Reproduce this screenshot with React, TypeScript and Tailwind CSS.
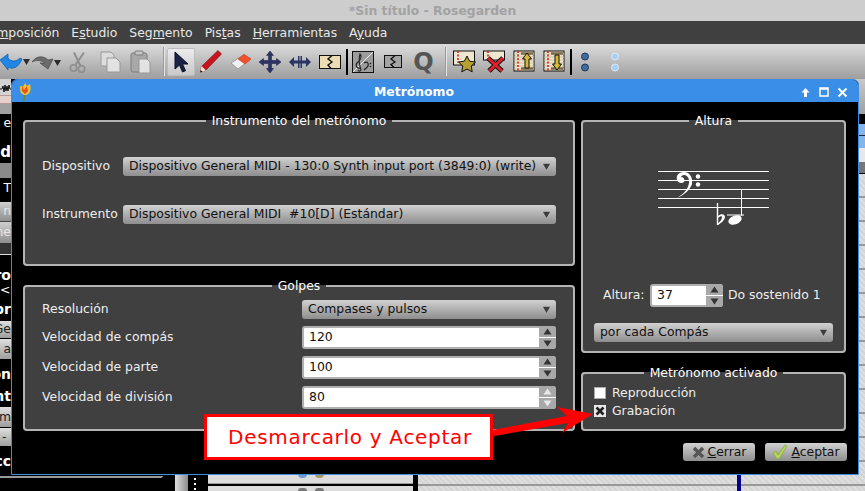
import type { ReactNode } from "react";

const dark = "bg-black text-white";
const strong = "bg-black text-white font-bold text-[14px]";
const btn = "bg-linear-to-b from-[#e0e0e0] to-[#9e9e9e] text-[#222]";

const leftRows: { h: string; cls: string; text?: string }[] = [
  { h: "h-[18px]", cls: `${dark} justify-end`, text: "e" },
  { h: "h-[31px]", cls: `${dark} font-bold justify-end text-[15px] pt-[9px]`, text: "d" },
  { h: "h-[15px]", cls: "bg-[#8a8a8a]" },
  { h: "h-[24px]", cls: `${dark} justify-end pb-[4px]`, text: "T" },
  { h: "h-[20px]", cls: "bg-linear-to-b from-[#cfcfcf] to-[#8e8e8e] text-[#e6e6e6] justify-end border-b border-[#444]", text: "n" },
  { h: "h-[21px]", cls: "bg-linear-to-b from-[#cfcfcf] to-[#8e8e8e] text-[#e6e6e6] justify-end", text: "ne" },
  { h: "h-[11px]", cls: "bg-[#333]" },
  { h: "h-[1px]", cls: "bg-[#ddd]" },
  { h: "h-[28px]", cls: `${strong} justify-end pt-[12px]`, text: "ro" },
  { h: "h-[15px]", cls: `${dark} justify-start`, text: "<s" },
  { h: "h-[23px]", cls: `${strong} justify-end`, text: "pr" },
  { h: "h-[17px]", cls: `${btn} justify-end`, text: "Ge" },
  { h: "h-[21px]", cls: `${btn} justify-end border-t border-black`, text: "a" },
  { h: "h-[24px]", cls: `${strong} justify-end pt-[6px]`, text: "ón" },
  { h: "h-[24px]", cls: `${strong} justify-end pt-[2px]`, text: "nt" },
  { h: "h-[20px]", cls: `${btn} justify-end`, text: "rm" },
  { h: "h-[19px]", cls: `${btn} justify-start border-t border-black pl-[2px]`, text: "-" },
  { h: "h-[30px]", cls: `${strong} justify-end`, text: "cc" },
];

function Cell({ w = "w-[30px]", children }: { w?: string; children: ReactNode }) {
  return <div className={`${w} h-[24px] flex items-center justify-center shrink-0`}>{children}</div>;
}

function Split({ fill }: { fill: string }) {
  return (
    <svg width="22" height="14" viewBox="0 0 22 14">
      <rect x="0.5" y="0.5" width="21" height="13" fill={fill} stroke="#111" />
      <path d="M13 0.5 9 4l4 3-4 3 3 3.5" fill="none" stroke="#111" strokeWidth="1.4" />
    </svg>
  );
}

function Track({ mode }: { mode: "star" | "x" | "up" | "down" }) {
  const ruled = (
    <>
      <rect x="1" y="1" width="20" height="20" fill="#efe6cf" stroke="#111" />
      {[4, 7, 10, 13, 16, 19].map((y) => (
        <path key={y} d={`M1 ${y}h20`} stroke="#cdbf9f" />
      ))}
      <path d="M5 1v20" stroke="#d6202a" strokeWidth="1.6" strokeDasharray="2 1.5" />
    </>
  );
  if (mode === "star")
    return (
      <svg width="23" height="23" viewBox="0 0 23 23">
        <rect x="0.5" y="1" width="21" height="14" fill="#efe6cf" stroke="#111" />
        <path d="M5 1v12" stroke="#d6202a" strokeWidth="1.6" strokeDasharray="2 1.5" />
        <path d="M14 6l2.600 5.200 5.900.8-4.300 4 1 5.800-5.200-2.800-5.200 2.800 1-5.800-4.300-4 5.900-.8z" fill="#b8a030" stroke="#111" />
      </svg>
    );
  if (mode === "x")
    return (
      <svg width="23" height="23" viewBox="0 0 23 23">
        <rect x="0.5" y="1" width="21" height="9" fill="#efe6cf" stroke="#111" />
        <path d="M5 1v8" stroke="#d6202a" strokeWidth="1.6" strokeDasharray="2 1.5" />
        <path d="M5 8l14 13M20 8 6 21" stroke="#111" strokeWidth="5" />
        <path d="M5 8l14 13M20 8 6 21" stroke="#e0202a" strokeWidth="3" />
      </svg>
    );
  return (
    <svg width="23" height="23" viewBox="0 0 23 23">
      {ruled}
      <path d="M8 3.500h12M8 18.500h12" stroke="#7a6a48" strokeWidth="2.4" />
      {mode === "up" ? (
        <path d="M14 3l4.500 6H16v9h-4V9H9.500z" fill="#d4b83a" stroke="#111" />
      ) : (
        <path d="M14 20l4.500-6H16V5h-4v9H9.500z" fill="#d4b83a" stroke="#111" />
      )}
    </svg>
  );
}

function Dots({ light }: { light?: boolean }) {
  const fill = light ? "#a8d0f4" : "#3e6c9c";
  const ring = light ? "#dbe9f6" : "#1e3a5c";
  return (
    <svg width="10" height="20" viewBox="0 0 10 20">
      <circle cx="5" cy="4.500" r="3.500" fill={fill} stroke={ring} />
      <circle cx="5" cy="15.500" r="3.500" fill={fill} stroke={ring} />
    </svg>
  );
}

function Toolbar() {
  return (
    <div className="h-[35px] bg-linear-to-b from-[#dcdcdc] to-[#9e9e9e] flex items-center -ml-[4px] shrink-0">
      <Cell w="w-[35px]">
        <svg width="32" height="20" viewBox="0 0 32 20">
          <path d="M2 8 10 2v4c3 4 8 4 12 0l2 1c-3 8-9 11-14 8v3z" fill="#1f86e6" stroke="#0b5cab" strokeWidth="0.7" />
          <path d="M25 7h7l-3.500 6z" fill="#2c2c2c" />
        </svg>
      </Cell>
      <Cell w="w-[30px]">
        <svg width="30" height="18" viewBox="0 0 30 18">
          <path d="M1 9c4-6 11-7 16-2l5-1-5 10-8-6h5c-4-3-9-3-13-1z" fill="#6c6c6c" stroke="#3c3c3c" strokeWidth="0.6" />
          <path d="M23 7h7l-3.500 6z" fill="#2c2c2c" />
        </svg>
      </Cell>
      <Cell w="w-[34px]">
        <svg width="19" height="22" viewBox="0 0 19 22" fill="none" stroke="#8e8e8e" strokeWidth="1.6">
          <circle cx="4.500" cy="17" r="3.200" />
          <circle cx="12.500" cy="18" r="3.200" />
          <path d="M6 14.500 15 1.500M11.500 15 5 1.500" strokeWidth="2" />
        </svg>
      </Cell>
      <Cell>
        <svg width="21" height="22" viewBox="0 0 21 22">
          <path d="M1 1h10l3 3v11H1z" fill="#dcdcdc" stroke="#989898" />
          <path d="M7 7h9l4 4v10H7z" fill="#e2e2e2" stroke="#989898" />
        </svg>
      </Cell>
      <Cell>
        <svg width="21" height="24" viewBox="0 0 21 24">
          <rect x="1" y="3" width="16" height="19" rx="2" fill="#a8a8a8" stroke="#7c7c7c" />
          <rect x="5" y="1" width="8" height="4" rx="1" fill="#c4c4c4" stroke="#7c7c7c" />
          <path d="M9 9h8l3 3v11H9z" fill="#e2e2e2" stroke="#989898" />
        </svg>
      </Cell>
      <div className="ml-[8px] w-[2px] h-[29px] bg-[#e6e6e6] border-l border-[#9a9a9a] shrink-0" />
      <div className="ml-[2px] w-[28px] h-[28px] bg-linear-to-b from-[#ececec] to-[#c8c8c8] border border-[#bdbdbd] rounded-[2px] flex items-center justify-center shrink-0">
        <svg width="14" height="22" viewBox="0 0 14 22">
          <path d="M1 1v17l4.500-4 3 7 3-1.300-3-6.700h5.500z" fill="#1c2446" stroke="#0b0f24" />
        </svg>
      </div>
      <Cell w="w-[31px]">
        <svg width="23" height="23" viewBox="0 0 23 23">
          <path d="M19 0.500l3.500 3.500L6.500 20.500l-5 1 1-5z" fill="#c8141e" stroke="#6c0a10" strokeWidth="0.6" />
          <path d="M1 22.500l1.500-6.500 4.500 4.500z" fill="#f0e0c8" />
          <path d="M1 22.500l.6-2.500 2 2z" fill="#111" />
        </svg>
      </Cell>
      <Cell w="w-[29px]">
        <svg width="22" height="18" viewBox="0 0 22 18">
          <path d="M1 10 14 1.500l7 4.500L8 16z" fill="#f0f0f0" stroke="#9c9c9c" />
          <path d="M8 6l6-4.500 7 4.500-6 5z" fill="#f0502a" stroke="#c83c1c" strokeWidth="0.6" />
        </svg>
      </Cell>
      <Cell>
        <svg width="22" height="22" viewBox="0 0 22 22">
          <path d="M11 0l3.500 4.500H12.500V9.500H17.500V7.500L22 11l-4.500 3.500v-2H12.500v5h2L11 22l-3.500-4.500h2v-5h-5v2L0 11l4.500-3.500v2h5v-5h-2z" fill="#2a3566" stroke="#131a3c" strokeWidth="0.5" />
        </svg>
      </Cell>
      <Cell>
        <svg width="22" height="12" viewBox="0 0 22 12">
          <path d="M0 6l5-5v3.500h4V0h1.500v4.500h1V0H13v4.500h4V1l5 5-5 5V7.500h-4V12h-1.500V7.500h-1V12H9V7.500H5V11z" fill="#2a3566" />
        </svg>
      </Cell>
      <Cell>
        <Split fill="#ecdcb4" />
      </Cell>
      <div className="w-[2px] h-[26px] bg-black shrink-0 ml-[1px]" />
      <Cell>
        <svg width="22" height="22" viewBox="0 0 22 22">
          <rect x="0.5" y="0.500" width="21" height="21" fill="#9c9c9c" stroke="#111" />
          <path d="M1 21 21 1" stroke="#eee" />
          <path d="M8 17c-4 1-5-4-2-6 3-3 4-6 2-8-1 3-1 10 1 16-1 2-3 1-3 0" fill="none" stroke="#222" strokeWidth="1.100" />
          <path d="M12 12c3-2 5 0 4 3-1 2-3 3-4 4" fill="none" stroke="#222" strokeWidth="1.300" />
          <circle cx="18.500" cy="12.500" r="0.800" fill="#222" />
          <circle cx="18.500" cy="15.500" r="0.800" fill="#222" />
        </svg>
      </Cell>
      <Cell>
        <svg width="18" height="13" viewBox="0 0 18 13">
          <rect x="0.5" y="0.500" width="17" height="12" fill="#a4a4a4" stroke="#111" />
          <path d="M11 0.500 7 4l4 3-4 2.500 3 3" fill="none" stroke="#111" strokeWidth="1.300" />
        </svg>
      </Cell>
      <Cell w="w-[31px]">
        <span className="font-bold text-[24px] leading-none text-[#555]">Q</span>
      </Cell>
      <div className="ml-[6px] w-[2px] h-[29px] bg-[#e6e6e6] border-l border-[#9a9a9a] shrink-0" />
      <div className="w-[2px] shrink-0" />
      <Cell><Track mode="star" /></Cell>
      <Cell><Track mode="x" /></Cell>
      <Cell><Track mode="up" /></Cell>
      <Cell><Track mode="down" /></Cell>
      <div className="w-[2px] h-[26px] bg-black shrink-0 ml-[1px]" />
      <Cell w="w-[26px]"><Dots /></Cell>
      <Cell w="w-[34px]"><Dots light /></Cell>
    </div>
  );
}

function Panel({ title, className, children }: { title: string; className: string; children: ReactNode }) {
  return (
    <fieldset className={`border-[2px] border-[#b4b4b4] rounded-[4px] bg-[#404040] min-w-0 ${className}`}>
      <legend className="mx-auto px-[6px] leading-[15px] text-white">{title}</legend>
      {children}
    </fieldset>
  );
}

function Combo({ text, className }: { text: string; className: string }) {
  return (
    <div className={`h-[19px] rounded-[3px] bg-linear-to-b from-[#d2d2d2] to-[#8e8e8e] flex items-center justify-between pl-[6px] pr-[5px] text-[#111] ${className}`}>
      <span className="whitespace-pre">{text}</span>
      <svg width="9" height="9" viewBox="0 0 9 9">
        <path d="M0.500 1.500h8L4.500 8.500z" fill="#3c3c3c" stroke="#e0e0e0" strokeWidth="0.4" />
      </svg>
    </div>
  );
}

function Spin({ value, className, dim }: { value: string; className: string; dim?: boolean }) {
  const arrow = dim ? "#e8e8e8" : "#333";
  return (
    <div className={`rounded-[3px] border-[2px] border-[#b0b0b0] bg-white flex text-[#111] ${className}`}>
      <div className="flex-1 flex items-center pl-[5px]">{value}</div>
      <div className="w-[17px] -my-[2px] -mr-[2px] bg-[#a8a8a8] rounded-r-[3px] flex flex-col">
        <div className="flex-1 flex items-center justify-center border-b border-white">
          <svg width="9" height="7" viewBox="0 0 9 7"><path d="M4.500 0.500 8.500 6.500h-8z" fill={arrow} /></svg>
        </div>
        <div className="flex-1 flex items-center justify-center">
          <svg width="9" height="7" viewBox="0 0 9 7"><path d="M0.500 0.500h8L4.500 6.500z" fill={arrow} /></svg>
        </div>
      </div>
    </div>
  );
}

function Staff() {
  return (
    <svg width="112" height="62" viewBox="0 0 112 62" className="block">
      {[0.5, 9.5, 18.5, 27.5, 36.5].map((y) => (
        <path key={y} d={`M0 ${y}h111`} stroke="#fff" />
      ))}
      <path d="M19 27c7-3 13-8 15-14 1-6-2-12-8-12-6 0-8 4-7 8 1 3 5 4 7 2 1-2 0-5-3-5 1-3 7-3 8 3 1 7-5 14-12 18z" fill="#fff" />
      <circle cx="40" cy="5.500" r="2.200" fill="#fff" />
      <circle cx="40" cy="13.500" r="2.200" fill="#fff" />
      <path d="M59.500 32v22" stroke="#fff" strokeWidth="1.400" />
      <path d="M60 45c3-3 7-2 7 1 0 3-4 6-7 8v-2c2-1 4-4 4-6 0-1-2-1-4 1z" fill="#fff" />
      <path d="M69 44h17" stroke="#fff" />
      <path d="M83.500 18v27" stroke="#fff" />
      <ellipse cx="77" cy="49" rx="7" ry="4.300" fill="#fff" transform="rotate(-22 77 49)" />
    </svg>
  );
}

function Button({ label, rest, icon, className }: { label: string; rest: string; icon: ReactNode; className: string }) {
  return (
    <div className={`h-[18px] rounded-[3px] bg-linear-to-b from-[#d2d2d2] to-[#8e8e8e] flex items-center justify-center gap-[3px] text-[#111] ${className}`}>
      {icon}
      <span><span className="underline">{label}</span>{rest}</span>
    </div>
  );
}

function Dialog() {
  return (
    <div className="absolute left-[11px] top-[79px] w-[848px] h-[396px] border border-[#3b8ee6] rounded-t-[6px] flex flex-col bg-black text-[#eee]">
      <div className="h-[22px] bg-[#3b8ee6] rounded-t-[5px] flex items-center px-[7px] pt-[2px] shrink-0">
        <svg width="12" height="19" viewBox="0 0 12 19" className="shrink-0">
          <path d="M5 18 6 11" stroke="#6a8a2a" strokeWidth="1.500" />
          <path d="M1 3c2 0 3 1 3 1l2-4 2 3 3-2c1 4 1 8-2 10-2 2-5 1-7-1C1 8 1 5 1 3z" fill="#f5c030" />
          <path d="M3 3l2 4 3-4 1 5-3 3-3-3z" fill="#e8501e" />
        </svg>
        <span className="flex-1 text-center font-bold text-white pr-[3px]">Metrónomo</span>
        <div className="flex items-center gap-[8px] pr-[3px]">
          <svg width="11" height="11" viewBox="0 0 11 11"><path d="M5.500 1 9.500 5.500H7V10H4V5.500H1.500z" fill="#fff" /></svg>
          <svg width="10" height="10" viewBox="0 0 10 10"><rect x="1" y="1" width="8" height="8" fill="none" stroke="#fff" strokeWidth="1.500" /><path d="M1 2h8" stroke="#fff" strokeWidth="1.500" /></svg>
          <svg width="11" height="11" viewBox="0 0 11 11"><path d="M1.500 1.500l8 8M9.500 1.500l-8 8" stroke="#fff" strokeWidth="2" /></svg>
        </div>
      </div>
      <div className="flex-1 px-[11px] pt-[11px] flex flex-col">
        <div className="flex gap-[6px]">
          <div className="w-[552px] flex flex-col gap-[12px]">
            <Panel title="Instrumento del metrónomo" className="h-[153px] pl-[17px] pr-[17px] pt-[29px]">
              <div className="grid grid-cols-[81px_1fr] items-center gap-y-[29px]">
                <span>Dispositivo</span>
                <Combo text="Dispositivo General MIDI - 130:0 Synth input port (3849:0) (write)" className="" />
                <span>Instrumento</span>
                <Combo text="Dispositivo General MIDI  #10[D] (Estándar)" className="" />
              </div>
            </Panel>
            <Panel title="Golpes" className="h-[153px] pl-[17px] pr-[17px] pt-[7px]">
              <div className="grid grid-cols-[260px_1fr] items-center">
                <span>Resolución</span>
                <Combo text="Compases y pulsos" className="" />
                <span className="mt-[7px]">Velocidad de compás</span>
                <Spin value="120" className="h-[23px] mt-[7px]" />
                <span className="mt-[7px]">Velocidad de parte</span>
                <Spin value="100" className="h-[23px] mt-[7px]" />
                <span className="mt-[7px]">Velocidad de división</span>
                <Spin value="80" className="h-[23px] mt-[7px]" dim />
              </div>
            </Panel>
          </div>
          <div className="w-[265px] flex flex-col gap-[12px]">
            <Panel title="Altura" className="h-[240px] px-[11px]">
              <div className="flex justify-center pt-[43px] pl-[1px]"><Staff /></div>
              <div className="flex items-center mt-[51px] pl-[9px] gap-[5px] whitespace-nowrap">
                <span className="w-[42px]">Altura:</span>
                <Spin value="37" className="w-[73px] h-[23px]" />
                <span>Do sostenido 1</span>
              </div>
              <Combo text="por cada Compás" className="mt-[16px]" />
            </Panel>
            <Panel title="Metrónomo activado" className="h-[66px] px-[11px] pt-[6px]">
              <div className="flex flex-col gap-[4px]">
                <div className="flex items-center gap-[6px] h-[14px]">
                  <span className="w-[12px] h-[12px] bg-white border border-[#aaa]" />
                  Reproducción
                </div>
                <div className="flex items-center gap-[6px] h-[14px]">
                  <span className="w-[12px] h-[12px] bg-[#e8e8e8] flex items-center justify-center">
                    <svg width="10" height="10" viewBox="0 0 10 10"><path d="M1.500 1.500l7 7M8.500 1.500l-7 7" stroke="#222" strokeWidth="2.600" /></svg>
                  </span>
                  Grabación
                </div>
              </div>
            </Panel>
          </div>
        </div>
        <div className="flex justify-end gap-[10px] mt-[12px]">
          <Button
            label="C"
            rest="errar"
            className="w-[72px]"
            icon={<svg width="13" height="13" viewBox="0 0 13 13"><path d="M2 2l9 9M11 2l-9 9" stroke="#555" strokeWidth="3.400" /></svg>}
          />
          <Button
            label="A"
            rest="ceptar"
            className="w-[82px]"
            icon={<svg width="16" height="16" viewBox="0 0 16 16"><path d="M1 9l3-2 2 4 7-10 2 1-8 13H5z" fill="#b6d65a" stroke="#7c9c2a" strokeWidth="0.6" /></svg>}
          />
        </div>
      </div>
    </div>
  );
}

export default function App() {
  return (
    <div className="relative w-[865px] h-[491px] overflow-hidden flex flex-col bg-black font-['DejaVu_Sans',sans-serif] text-[12.4px]">
      <div className="h-[21px] bg-[#cdcdcd] flex items-center justify-center pt-[1px] font-bold text-[#a2a2a2] shrink-0">
        *Sin título - Rosegarden
      </div>
      <div className="h-[23px] bg-[#404040] text-[#e8e8e8] flex items-center pt-[1px] whitespace-nowrap shrink-0 -ml-[20px] gap-[12px]">
        <span>Co<span className="underline">m</span>posición</span>
        <span>E<span className="underline">s</span>tudio</span>
        <span>Seg<span className="underline">m</span>ento</span>
        <span>Pis<span className="underline">t</span>as</span>
        <span><span className="underline">H</span>erramientas</span>
        <span>A<span className="underline">y</span>uda</span>
      </div>
      <Toolbar />
      <div className="flex-1 flex min-h-0">
        <div className="w-[163px] shrink-0 flex flex-col overflow-hidden">
          <div className="w-[11px] flex flex-col overflow-hidden">
            {/* waveform stub of the track behind the dialog */}
            <svg width="11" height="16" viewBox="0 0 11 16" className="block bg-[#d4d4d4] shrink-0">
              <path d="M0 10h2l1-3 1 6 1-7 1 6 1-5 1 5 1-6 1 4h1" fill="none" stroke="#111" />
            </svg>
            <div className="h-[9px] bg-[#e6d0cc] border-y border-[#b89a9a] shrink-0" />
            <div className="h-[10px] bg-[#a0a0a0] shrink-0" />
            {leftRows.map((r, i) => (
              <div key={i} className={`${r.h} ${r.cls} flex items-center overflow-hidden whitespace-nowrap shrink-0`}>
                {r.text}
              </div>
            ))}
          </div>
          <div className="h-[2px] bg-[#9a9a9a] rounded-br-[3px]" />
        </div>
        <div className="w-[12px] bg-black shrink-0" />
        <div className="w-[13px] bg-linear-to-r from-[#e0e0e0] to-[#8c8c8c] shrink-0" />
        <div className="w-[20px] shrink-0 bg-black flex flex-col justify-end items-start pl-[6px] pb-[1px] gap-[3px]">
          <div className="w-[2px] h-[2px] bg-white" />
          <div className="w-[2px] h-[2px] bg-white" />
          <div className="w-[2px] h-[2px] bg-white" />
        </div>
        <div className="w-[205px] shrink-0 flex flex-col justify-end">
          <div className="h-[10px] bg-[#dcdcdc] border-b border-[#999] flex justify-center gap-[8px]">
            <div className="w-[9px] h-[4px] rounded-b-full bg-[#6f9cd0]" />
            <div className="w-[9px] h-[4px] rounded-b-full bg-[#a89868]" />
          </div>
          <div className="h-[2px] bg-black" />
          <div className="h-[5px] bg-[#dcdcdc] flex justify-center gap-[8px]">
            <div className="w-[9px] h-[3px] mt-[2px] rounded-t-full bg-[#777]" />
            <div className="w-[9px] h-[3px] mt-[2px] rounded-t-full bg-[#777]" />
          </div>
        </div>
        <div className="w-[5px] bg-black shrink-0" />
        <div className="flex-1 flex flex-col relative">
          <div className="h-[35px] bg-linear-to-b from-[#c8c8c8] to-[#a0a0a0] shrink-0" />
          <div className="h-[10px] bg-black shrink-0" />
          <div className="h-[12px] bg-[#85b4e8] border-b border-[#223] shrink-0" />
          <div className="h-[12px] bg-[#85b4e8] shrink-0" />
          <div className="h-[14px] bg-[#e8e8e8] shrink-0" />
          <div className="h-[11px] bg-[#777] shrink-0" />
          <div className="h-[1px] bg-black shrink-0" />
          <div className="flex-1 flex justify-end pr-[124px] bg-[repeating-linear-gradient(to_bottom,transparent_0px,transparent_22px,#999_22px,#999_24px),repeating-linear-gradient(45deg,#d4d4d4_0px,#d4d4d4_2px,#dedede_2px,#dedede_4px)]">
            <div className="w-[4px] bg-[#00008b]" />
          </div>
        </div>
      </div>
      <Dialog />
      {/* Red annotation on top of the dialog */}
      <svg width="110" height="40" viewBox="0 0 110 40" className="absolute left-[488px] top-[400px]">
        <path d="M4 30 79 16 69 7 105 14 74 33 80 23 6 36z" fill="#f00" />
      </svg>
      <div className="absolute left-[204px] top-[414px] w-[289px] h-[46px] bg-white border-[3px] border-[#f00] flex items-center justify-center pl-[3px] text-[#f00] text-[20px] tracking-[0.7px] whitespace-nowrap">
        Desmarcarlo y Aceptar
      </div>
    </div>
  );
}
